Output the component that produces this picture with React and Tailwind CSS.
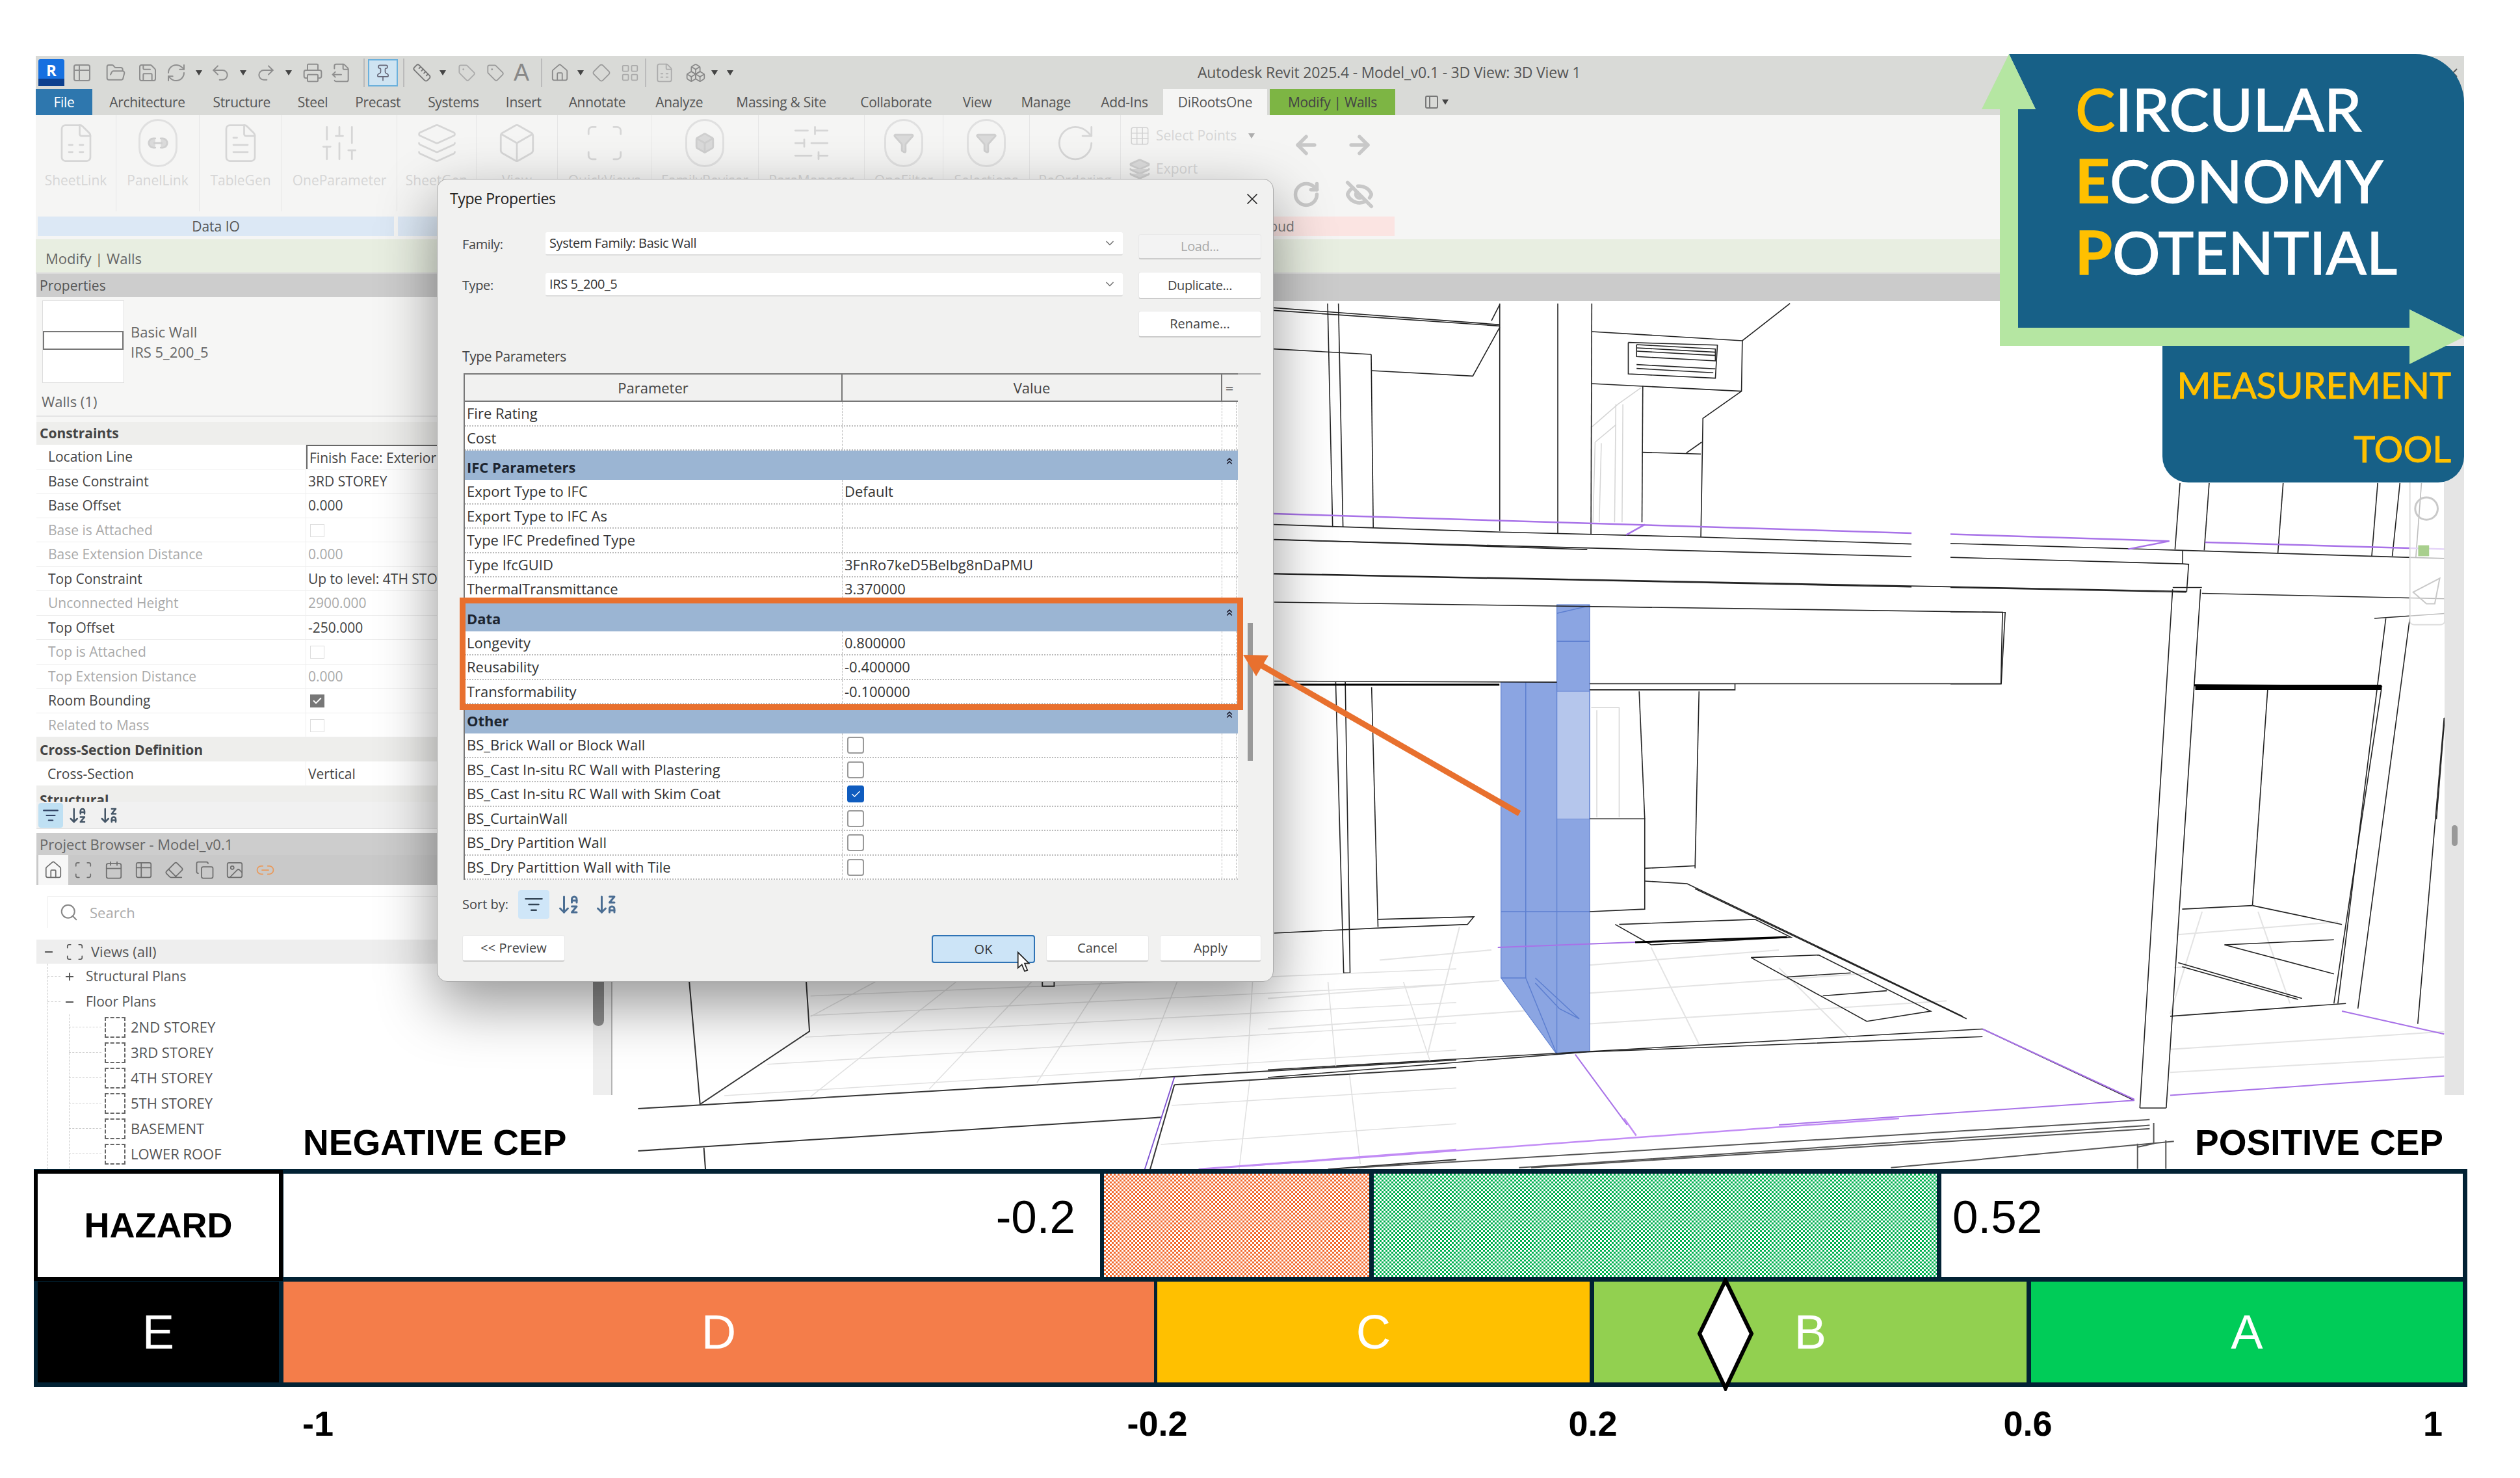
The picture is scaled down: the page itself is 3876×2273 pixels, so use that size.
import {
  ArrowDownAZ, ArrowDownZA, ArrowLeft, ArrowRight, Box, Check, ChevronDown, ChevronsUp, EyeOff,
  FileOutput, FileSpreadsheet, FileText, Filter, FolderOpen, Grid3x3, Home, Layers, Link2, ListFilter, Minus,
  Pin, Plus, Printer, Redo2, RefreshCw, RotateCw, Ruler, Save, Scan, Search, SlidersHorizontal, SlidersVertical,
  Table2, Tag, Undo2, X, Diamond, Calendar, Copy, Image, PanelLeft, Eraser, LayoutGrid, Boxes,
} from "lucide-react";

const Caret = ({ className = "" }) => (
  <svg viewBox="0 0 10 8" className={`w-[10px] h-[8px] ${className}`}>
    <path d="M0 0h10L5 8z" fill="#444" />
  </svg>
);

const quickAccess = [
  { icon: Table2, cell: "w-[54px]" },
  { icon: FolderOpen, cell: "w-[50px]" },
  { icon: Save, cell: "w-[47px]" },
  { icon: RefreshCw, cell: "w-[41px]" },
  { caret: true, cell: "w-[30px]" },
  { icon: Undo2, cell: "w-[36px]" },
  { caret: true, cell: "w-[34px]" },
  { icon: Redo2, cell: "w-[36px]" },
  { caret: true, cell: "w-[34px]" },
  { icon: Printer, cell: "w-[40px]" },
  { icon: FileOutput, cell: "w-[48px]" },
];

const tabs = [
  { label: "Architecture", cell: "w-[123px]" },
  { label: "Structure", cell: "w-[91px]" },
  { label: "Steel", cell: "w-[51px]" },
  { label: "Precast", cell: "w-[73px]" },
  { label: "Systems", cell: "w-[83px]" },
  { label: "Insert", cell: "w-[56px]" },
  { label: "Annotate", cell: "w-[94px]" },
  { label: "Analyze", cell: "w-[82px]" },
  { label: "Massing & Site", cell: "w-[155px]" },
  { label: "Collaborate", cell: "w-[122px]" },
  { label: "View", cell: "w-[51px]" },
  { label: "Manage", cell: "w-[84px]" },
  { label: "Add-Ins", cell: "w-[81px]" },
];

const ribbon = [
  { label: "SheetLink", icon: FileSpreadsheet, cell: "w-[124px]" },
  { label: "PanelLink", icon: Link2, cell: "w-[128px]", ring: true },
  { label: "TableGen", icon: FileText, cell: "w-[127px]" },
  { label: "OneParameter", icon: SlidersVertical, cell: "w-[177px]" },
  { label: "SheetGen", icon: Layers, cell: "w-[122px]" },
  { label: "View", icon: Box, cell: "w-[125px]" },
  { label: "QuickViews", icon: Scan, cell: "w-[144px]" },
  { label: "FamilyReviser", icon: Box, cell: "w-[165px]", ring: true },
  { label: "ParaManager", icon: SlidersHorizontal, cell: "w-[163px]" },
  { label: "OneFilter", icon: Filter, cell: "w-[121px]", ring: true },
  { label: "Selections", icon: Filter, cell: "w-[133px]", ring: true },
  { label: "ReOrdering", icon: RotateCw, cell: "w-[140px]" },
];

const properties = [
  { label: "Location Line", value: "Finish Face: Exterior", boxed: true },
  { label: "Base Constraint", value: "3RD STOREY" },
  { label: "Base Offset", value: "0.000" },
  { label: "Base is Attached", check: "off", off: true },
  { label: "Base Extension Distance", value: "0.000", off: true },
  { label: "Top Constraint", value: "Up to level: 4TH STOREY" },
  { label: "Unconnected Height", value: "2900.000", off: true },
  { label: "Top Offset", value: "-250.000" },
  { label: "Top is Attached", check: "off", off: true },
  { label: "Top Extension Distance", value: "0.000", off: true },
  { label: "Room Bounding", check: "on" },
  { label: "Related to Mass", check: "off", off: true },
];

const storeys = ["2ND STOREY", "3RD STOREY", "4TH STOREY", "5TH STOREY", "BASEMENT", "LOWER ROOF", ""];

const browserIcons = [
  { icon: Home, cell: "w-[46px] bg-[#f7f7f7]" },
  { icon: Scan, cell: "w-[46px]" },
  { icon: Calendar, cell: "w-[47px]" },
  { icon: Table2, cell: "w-[46px]" },
  { icon: Eraser, cell: "w-[48px]" },
  { icon: Copy, cell: "w-[46px]" },
  { icon: Image, cell: "w-[46px]" },
  { icon: Link2, cell: "w-[48px] text-[#e99a5c]" },
];

const paramRows = [
  { h: "", rows: [{ p: "Fire Rating" }, { p: "Cost" }] },
  {
    h: "IFC Parameters",
    rows: [
      { p: "Export Type to IFC", v: "Default" },
      { p: "Export Type to IFC As" },
      { p: "Type IFC Predefined Type" },
      { p: "Type IfcGUID", v: "3FnRo7keD5Belbg8nDaPMU" },
      { p: "ThermalTransmittance", v: "3.370000" },
    ],
  },
  {
    h: "Data",
    rows: [
      { p: "Longevity", v: "0.800000" },
      { p: "Reusability", v: "-0.400000" },
      { p: "Transformability", v: "-0.100000" },
    ],
  },
  {
    h: "Other",
    rows: [
      { p: "BS_Brick Wall or Block Wall", c: "off" },
      { p: "BS_Cast In-situ RC Wall with Plastering", c: "off" },
      { p: "BS_Cast In-situ RC Wall with Skim Coat", c: "on" },
      { p: "BS_CurtainWall", c: "off" },
      { p: "BS_Dry Partition Wall", c: "off" },
      { p: "BS_Dry Partittion Wall with Tile", c: "off" },
    ],
  },
];

// line work traced from the 3D view, one group per traced region
const sketchTop = [
  "30,100 575,178", "30,112 575,184", "160,80 172,1112", "186,80 197,1112", "30,290 265,315", "265,315 270,1115",
  "265,390 510,415 575,190", "555,160 575,85", "575,80 575,1130", "715,80 715,1140", "797,80 795,1145",
  "797,210 1160,252 1275,80", "1160,252 1158,485 1065,610 1060,1158", "797,450 1158,485", "920,460 918,1090",
  "918,767 1060,775", "1025,770 1062,720", "885,260 1100,272 1095,425 885,405 885,260", "905,270 1095,290 1095,345 905,325 905,270",
  "905,285 1095,305", "905,300 1095,320", "905,362 1095,382", "905,380 1090,400",
  "30,1100 575,1135 1060,1158 1568,1190", "30,1170 1568,1248", "30,1328 1568,1388",
];
const sketchTopGray = [
  "860,545 915,470", "855,545 852,1090", "872,545 870,1090", "805,720 855,640", "805,720 800,1090", "820,725 815,1090", "797,650 860,545",
];
const sketchRight = [
  "700,410 1490,445", "0,440 700,468 718,470 712,590", "0,570 710,590", "670,570 758,570", "758,595 1490,618",
  "1278,703 1490,682", "0,380 700,410", "0,675 165,677 153,985 0,985", "692,120 677,405", "780,120 765,410", "1003,120 987,422",
  "1288,120 1270,435", "1355,120 1332,435", "1420,120 1403,440", "700,410 700,468", "1490,1130 1465,1568",
];
const sketchMain = [
  "8,420 400,440", "8,487 1150,522", "8,543 920,563 918,703", "8,698 362,700", "403,703 918,703",
  "1133,518 1092,1535", "1168,518 1125,1535", "1092,1535 1125,1535",
  "1400,575 1340,1330", "1430,575 1365,1340", "1395,708 1335,1330", "1252,715 1233,1138", "1233,1138 1145,1145", "1233,1138 1345,1175",
  "1198,1215 1335,1205", "1198,1215 1335,1272", "1140,1250 1295,1320", "1145,1258 1290,1322", "1130,1355 1350,1330", "1440,1370 1473,770",
  "85,700 95,1270 103,1270 97,700", "130,710 138,1180", "138,1165 258,1160 250,1175 140,1182", "8,1192 140,1182",
  "403,715 585,715 585,703", "465,718 472,968", "540,718 535,1065", "403,968 472,968 472,1145 403,1150", "472,1065 535,1060",
  "472,1090 525,1095 870,1355", "535,1105 875,1360", "435,1175 480,1215 655,1200 610,1165 440,1175",
  "605,1240 690,1235 830,1345 750,1365 605,1240", "650,1278 730,1270", "695,1315 775,1305",
  "0,1460 895,1380", "0,1475 400,1425 895,1395", "895,1380 1085,1520",
];
const sketchHeavy = ["8,705 290,705", "1160,706 1395,708", "460,1210 650,1200"];
const sketchPurple = ["895,1380 1085,1518", "640,1568 1085,1520", "1130,1510 1473,1472", "385,1430 450,1568", "288,1220 460,1210", "1345,1345 1473,1390"];
const sketchFloor = [
  "140,1245 280,1225", "400,1255 640,1225", "0,1320 290,1285", "400,1310 760,1270", "0,1380 360,1340", "400,1370 850,1325",
  "1140,1195 1340,1170", "1135,1260 1150,1258", "1130,1420 1473,1385", "1130,1465 1473,1435", "240,1180 200,1430", "480,1220 540,1410",
  "640,1260 730,1400", "1170,1150 1130,1350", "1240,1150 1280,1330",
];
const sketchBelow = [
  "145,60 165,625 368,288 362,60", "50,645 1568,420", "50,840 1020,685", "172,825 175,925", "1045,535 1000,925", "1045,535 1568,455",
  "1330,925 1568,880", "800,60 800,80 822,80 822,60",
];
const sketchBelowGray = [
  "370,125 1568,0", "370,215 1568,70", "360,315 1568,155", "290,440 1568,250", "210,585 1568,375", "1040,630 1568,550", "1020,810 1568,715",
  "490,60 370,220", "640,60 370,590", "780,60 590,555", "910,60 790,525", "1050,60 980,500", "1190,60 1180,470", "1330,60 1345,460", "1470,60 1520,430",
  "1185,510 1165,925", "1370,490 1390,900",
];
const sketchLow = ["130,215 1110,5", "330,215 1110,30", "345,215 1110,45", "790,215 1140,100", "1095,110 1095,220", "1130,95 1130,220", "1115,20 1115,110 1095,125"];

const Lines = ({ items, stroke = "#222", width = 1.6 }) =>
  items.map((pts) => (
    <polyline key={pts} points={pts} fill="none" stroke={stroke} strokeWidth={width} vectorEffect="non-scaling-stroke" />
  ));

function ModelView() {
  return (
    <svg viewBox="942 463 2818 1335" className="w-full h-full block">
      <g transform="translate(1950 500) scale(1.2283 0.7844)">
        <Lines items={sketchFloor} stroke="#e3e3e3" width={2} />
        <polygon points="292,700 362,700 362,1430 292,1280" fill="#8ba5e2" stroke="#5d7fd0" />
        <polygon points="362,548 403,548 403,1425 362,1430" fill="#8ba5e2" stroke="#5d7fd0" />
        <polygon points="362,718 403,718 403,968 362,968" fill="#b5c6ec" stroke="#5d7fd0" />
        <Lines items={["323,700 323,1280", "292,1280 323,1280 362,1430", "362,620 403,620", "362,565 403,550", "292,1150 403,1150", "335,1280 390,1360 365,1340 335,1290"]} stroke="#5d7fd0" width={1.5} />
        <Lines items={["405,750 440,750 440,965", "412,755 412,965"]} stroke="#d5d5d5" width={1.5} />
        <Lines items={sketchMain} />
        <Lines items={sketchHeavy} stroke="#000" width={3} />
        <Lines items={sketchPurple} stroke="#a872e8" width={2} />
      </g>
      <g transform="translate(1940 440) scale(0.6378 0.3333)">
        <Lines items={sketchTopGray} stroke="#d5d5d5" width={1.5} />
        <Lines items={sketchTop} />
        <Lines items={["30,1050 1568,1140", "880,1148 925,1100"]} stroke="#a872e8" width={2.5} />
      </g>
      <g transform="translate(3000 700) scale(0.5102 0.3571)">
        <Lines items={sketchRight} />
        <Lines items={["738,1000 1298,1000"]} stroke="#000" width={8} />
        <Lines items={["0,340 660,370 535,405", "768,375 1490,405"]} stroke="#a872e8" width={2.5} />
        <rect x="1385" y="100" width="105" height="630" rx="14" fill="#fff" fillOpacity="0.7" stroke="#ddd" strokeWidth="2" vectorEffect="non-scaling-stroke" />
        <ellipse cx="1435" cy="230" rx="34" ry="48" fill="none" stroke="#c9c9c9" strokeWidth="3" vectorEffect="non-scaling-stroke" />
        <rect x="1410" y="388" width="33" height="47" fill="#a8cf8d" />
        <polygon points="1395,590 1475,530 1460,640 1435,640" fill="none" stroke="#c9c9c9" strokeWidth="2" vectorEffect="non-scaling-stroke" />
      </g>
      <g transform="translate(940 1490) scale(0.829 0.3333)">
        <Lines items={sketchBelowGray} stroke="#e0e0e0" width={1.5} />
        <Lines items={sketchBelow} stroke="#333" width={2} />
        <Lines items={["1045,500 990,925"]} stroke="#7c4fd0" width={1.8} />
        <Lines items={["1090,925 1568,835"]} stroke="#c28cf5" width={3} />
      </g>
      <g transform="translate(1926 1720) scale(1.2436 0.3527)">
        <Lines items={sketchLow} stroke="#555" width={2} />
        <Lines items={["0,205 800,0", "460,0 475,75"]} stroke="#c28cf5" width={2.5} />
      </g>
    </svg>
  );
}

function Ribbon() {
  return (
    <div className="h-[191px] bg-[#f5f5f4] flex flex-col">
      <div className="h-[156px] flex">
        {ribbon.map((item) => (
          <div key={item.label} className={`${item.cell} h-[148px] border-r border-[#e6e6e6] flex flex-col items-center`}>
            <div className="h-[86px] flex items-center justify-center">
              {item.ring ? (
                <div className="w-[60px] h-[74px] rounded-full border-[3px] border-[#e0e0e0] flex items-center justify-center">
                  <item.icon size={34} className="text-[#cfcfcf]" fill="#dadada" />
                </div>
              ) : (
                <item.icon size={66} strokeWidth={1} className="text-[#d6d6d6]" />
              )}
            </div>
            <div className="text-[21px] leading-[28px] text-[#d6d6d6] whitespace-nowrap">{item.label}</div>
          </div>
        ))}
        <div className="w-[241px] flex flex-col gap-[15px] pl-[12px] pt-[14px]">
          <div className="flex items-center gap-[8px] h-[36px]">
            <Grid3x3 size={34} strokeWidth={1} className="text-[#d2d2d2]" />
            <span className="text-[21px] text-[#d6d6d6]">Select Points</span>
            <Caret className="ml-[10px] opacity-40" />
          </div>
          <div className="flex items-center gap-[8px] h-[36px]">
            <Layers size={34} className="text-[#cfcfcf]" fill="#dcdcdc" />
            <span className="text-[21px] text-[#d6d6d6]">Export</span>
          </div>
        </div>
        <div className="grid grid-cols-2 w-[160px] pt-[24px] gap-y-[20px] text-[#c8c8c8]">
          <ArrowLeft size={44} strokeWidth={3} className="ml-[22px]" />
          <ArrowRight size={44} strokeWidth={3} className="ml-[24px]" />
          <RotateCw size={44} strokeWidth={3} className="ml-[22px]" />
          <EyeOff size={44} strokeWidth={3} className="ml-[24px]" />
        </div>
      </div>
      <div className="flex h-[30px] pl-[3px] text-[21px] leading-[30px]">
        <div className="w-[548px] bg-[#dce8f5] text-center text-[#555]">Data IO</div>
        <div className="w-[1200px] ml-[6px] bg-[#dce8f5]" />
        <div className="w-[333px] bg-[#fbe4e2] pl-[122px] text-[#777]">Cloud</div>
      </div>
    </div>
  );
}

function PropertiesPanel() {
  return (
    <>
      <div className="h-[36px] bg-[#cdcdcd] pl-[5px] text-[21px] leading-[36px] text-[#555]">Properties</div>
      <div className="h-[182px] bg-[#f6f6f5] relative pl-[9px] pt-[5px] flex gap-[10px]">
        <div className="w-[126px] h-[127px] bg-white border border-[#ddd] flex items-center">
          <div className="w-full h-[29px] bg-white border-2 border-[#777] -mt-[4px]" />
        </div>
        <div className="pt-[33px] text-[22px] leading-[31px] text-[#666]">
          <div>Basic Wall</div>
          <div>IRS 5_200_5</div>
        </div>
        <div className="absolute left-[8px] top-[146px] text-[22px] leading-[28px] text-[#666]">Walls (1)</div>
      </div>
      <div className="h-[10px] bg-[#f6f6f5] border-t-2 border-[#e4e4e4]" />
      <div className="h-[35px] bg-[#eeeeec] pl-[5px] text-[21px] font-bold leading-[35px] text-[#444]">Constraints</div>
      {properties.map((row) => (
        <div key={row.label} className={`h-[37.5px] flex border-b border-[#eee] bg-white text-[21px] leading-[36px] ${row.off ? "text-[#aaa]" : "text-[#444]"}`}>
          <div className="w-[415px] pl-[18px] border-r border-[#eee] whitespace-nowrap">{row.label}</div>
          <div className={`flex-1 pl-[3px] whitespace-nowrap ${row.boxed ? "border-t-2 border-l-2 border-[#666]" : ""}`}>
            {row.check === "off" && <div className="w-[22px] h-[20px] mt-[9px] ml-[3px] border border-[#ddd] bg-white" />}
            {row.check === "on" && (
              <div className="w-[22px] h-[20px] mt-[9px] ml-[3px] bg-[#777] flex items-center justify-center">
                <Check size={16} strokeWidth={3} className="text-white" />
              </div>
            )}
            {row.value}
          </div>
        </div>
      ))}
      <div className="h-[37px] bg-[#eeeeec] pl-[5px] text-[21px] font-bold leading-[39px] text-[#444]">Cross-Section Definition</div>
      <div className="h-[37px] flex bg-white text-[21px] leading-[38px] text-[#444]">
        <div className="w-[415px] pl-[17px] border-r border-[#eee]">Cross-Section</div>
        <div className="pl-[3px]">Vertical</div>
      </div>
      <div className="h-[25px] overflow-hidden bg-[#eeeeec] pl-[5px] text-[21px] font-bold leading-[44px] text-[#444]">Structural</div>
      <div className="h-[42px] bg-[#f1f1f1] flex items-center pl-[3px] gap-[8px] border-b border-[#ddd]">
        <div className="w-[38px] h-[38px] rounded-[4px] bg-[#bfe0f3] flex items-center justify-center">
          <ListFilter size={26} className="text-[#346]" />
        </div>
        <ArrowDownAZ size={30} className="text-[#456]" />
        <ArrowDownZA size={30} className="ml-[10px] text-[#456]" />
      </div>
    </>
  );
}

function ProjectBrowser() {
  return (
    <>
      <div className="mt-[6px] h-[34px] bg-[#cdcdcd] pl-[5px] text-[22px] leading-[34px] text-[#666]">Project Browser - Model_v0.1</div>
      <div className="h-[46px] bg-[#c9c9c9] flex pl-[3px]">
        {browserIcons.map((item, i) => (
          <div key={i} className={`${item.cell} h-full flex items-center justify-center text-[#6e6e6e]`}>
            <item.icon size={30} strokeWidth={1.4} />
          </div>
        ))}
      </div>
      <div className="h-[84px] bg-white pl-[17px] pt-[17px]">
        <div className="h-[49px] border-l border-t border-[#eee] flex items-center pl-[17px] gap-[17px] text-[22px] text-[#aaa]">
          <Search size={30} strokeWidth={1.6} className="text-[#888]" />
          Search
        </div>
      </div>
      <div className="h-[37px] bg-[#eee] flex items-center text-[22px] text-[#555]">
        <Minus size={18} strokeWidth={2.5} className="ml-[10px]" />
        <Scan size={30} strokeWidth={1.3} className="ml-[16px]" />
        <span className="ml-[10px]">Views (all)</span>
      </div>
      <div className="relative bg-white text-[#555] text-[21px]">
        <div className="absolute left-[17px] top-0 h-full border-l border-dashed border-[#ccc]" />
        <div className="absolute left-[50px] top-[78px] h-full border-l border-dashed border-[#ccc]" />
        <div className="absolute left-[856px] top-0 w-[30px] h-[202px] bg-[#eeeeee] border-r-2 border-[#b5b5b5]">
          <div className="w-[17px] h-[96px] bg-[#8c8c8c] rounded-b-full" />
        </div>
        <div className="h-[39px] flex items-center pl-[17px]">
          <span className="w-[20px] border-t border-dashed border-[#ccc]" />
          <Plus size={18} strokeWidth={2.5} className="ml-[5px]" />
          <span className="ml-[16px]">Structural Plans</span>
        </div>
        <div className="h-[39px] flex items-center pl-[17px]">
          <span className="w-[20px] border-t border-dashed border-[#ccc]" />
          <Minus size={18} strokeWidth={2.5} className="ml-[5px]" />
          <span className="ml-[16px]">Floor Plans</span>
        </div>
        {storeys.map((name, i) => (
          <div key={i} className="h-[39px] flex items-center pl-[50px] overflow-hidden text-[22px]">
            <span className="w-[50px] border-t border-dashed border-[#ccc]" />
            <span className="ml-[5px] w-[32px] h-[32px] border-2 border-dashed border-[#666] shrink-0" />
            <span className="ml-[8px]">{name}</span>
          </div>
        ))}
      </div>
    </>
  );
}

const CheckCell = ({ kind }) =>
  kind === "on" ? (
    <span className="mt-[5px] ml-[4px] w-[26px] h-[26px] rounded-[4px] bg-[#0f5cbf] flex items-center justify-center">
      <Check size={17} strokeWidth={2} className="text-white" />
    </span>
  ) : (
    <span className="block mt-[5px] ml-[4px] w-[26px] h-[26px] rounded-[4px] border-2 border-[#999] bg-white" />
  );

function ParamTable() {
  return (
    <div className="relative ml-[2px] w-[1226px] text-[22px] text-[#333]">
      <div className="h-[44px] flex border-t-2 border-b-2 border-[#777] w-[1191px] border-l-2 text-[#444] text-center leading-[40px]">
        <div className="w-[581px] border-r-2 border-[#777]">Parameter</div>
        <div className="w-[584px] border-r-2 border-[#777]">Value</div>
        <div className="w-[22px]">=</div>
      </div>
      <div className="absolute left-[1191px] top-0 w-[35px] border-t-2 border-[#aaa]" />
      <div className="w-[1191px] border-l-2 border-[#777] h-[735px] overflow-hidden">
        {paramRows.map((group) => (
          <div key={group.rows[0].p}>
            {group.h && (
              <div className="h-[45px] bg-[#9bb5d3] flex justify-between pl-[3px] pr-[5px] font-bold leading-[50px] text-[#1d2530]">
                {group.h}
                <ChevronsUp size={16} strokeWidth={2.5} className="mt-[8px] text-[#223]" />
              </div>
            )}
            {group.rows.map((row) => (
              <div key={row.p} className="h-[37.5px] flex bg-white border-b-2 border-dotted border-[#bbb] leading-[35px]">
                <div className="w-[581px] pl-[3px] border-r border-dashed border-[#bbb] whitespace-nowrap">{row.p}</div>
                <div className="w-[584px] pl-[3px] border-r border-dashed border-[#bbb]">{row.c ? <CheckCell kind={row.c} /> : row.v}</div>
                <div className="w-[22px] border-r border-dashed border-[#bbb]" />
              </div>
            ))}
          </div>
        ))}
      </div>
      <div className="absolute left-[1206px] top-[384px] w-[8px] h-[212px] bg-[#999]" />
      <div className="absolute -left-[6px] top-[345px] w-[1205px] h-[173px] border-[9px] border-[#e8702e]" />
    </div>
  );
}

const DialogButton = ({ label, cell, dim }) => (
  <div className={`${cell} rounded-[4px] border border-[#e8e8e8] border-b-2 border-b-[#ccc] flex items-center justify-center text-[20px] ${dim ? "bg-[#f3f3f3] text-[#aaa]" : "bg-white text-[#444]"}`}>
    {label}
  </div>
);

function TypePropertiesDialog() {
  return (
    <div className="absolute left-[672px] top-[275px] w-[1287px] h-[1235px] rounded-[16px] bg-[#f1f1f0] border border-[#aaa] shadow-[0_34px_90px_rgba(0,0,0,0.42)]">
      <div className="h-[81px] flex justify-between pl-[19px] pr-[18px] pt-[12px] text-[23px] tracking-[-0.4px] text-[#222]">
        Type Properties
        <X size={28} strokeWidth={1.5} className="mt-[4px]" />
      </div>
      <div className="pl-[38px] text-[20px] text-[#444]">
        <div className="h-[61px] flex tracking-[-0.4px]">
          <div className="w-[128px] leading-[38px]">Family:</div>
          <div className="w-[888px] h-[36px] bg-white border-b-2 border-[#ddd] rounded-[3px] flex justify-between items-center pl-[6px] pr-[10px] text-[#333]">
            System Family: Basic Wall
            <ChevronDown size={20} className="text-[#777]" />
          </div>
          <DialogButton label="Load..." cell="ml-[24px] mt-[3px] w-[189px] h-[39px]" dim />
        </div>
        <div className="h-[60px] flex tracking-[-0.4px]">
          <div className="w-[128px] leading-[42px]">Type:</div>
          <div className="w-[888px] h-[36px] mt-[2px] bg-white border-b-2 border-[#ddd] rounded-[3px] flex justify-between items-center pl-[6px] pr-[10px] text-[#333]">
            IRS 5_200_5
            <ChevronDown size={20} className="text-[#777]" />
          </div>
          <DialogButton label="Duplicate..." cell="ml-[24px] w-[189px] h-[42px]" />
        </div>
        <div className="h-[41px] flex pl-[1040px]">
          <DialogButton label="Rename..." cell="w-[189px] h-[41px]" />
        </div>
        <div className="h-[24px] mt-[17px] mb-[14px] leading-[24px] text-[21px] tracking-[-0.4px]">Type Parameters</div>
        <ParamTable />
        <div className="h-[44px] mt-[16px] flex items-center gap-[12px] text-[20px]">
          <span className="w-[74px] whitespace-nowrap">Sort by:</span>
          <div className="w-[48px] h-[44px] rounded-[4px] bg-[#cfe6f8] flex items-center justify-center">
            <ListFilter size={30} className="text-[#345]" />
          </div>
          <ArrowDownAZ size={36} className="text-[#4a6d92]" />
          <ArrowDownZA size={36} className="ml-[10px] text-[#4a6d92]" />
        </div>
        <div className="relative h-[43px] mt-[25px] flex items-start">
          <DialogButton label="<< Preview" cell="w-[158px] h-[41px]" />
          <div className="ml-[564px] w-[159px] h-[43px] bg-[#cce4f7] border-2 border-[#2f73b5] rounded-[4px] flex items-center justify-center text-[20px] text-[#333]">OK</div>
          <DialogButton label="Cancel" cell="ml-[17px] w-[158px] h-[41px]" />
          <DialogButton label="Apply" cell="ml-[17px] w-[156px] h-[41px]" />
          <svg viewBox="0 0 14 20" className="absolute left-[853px] top-[24px] w-[24px] h-[36px]">
            <path d="M1 1v14l3.5-3 2.5 6 2.500-1-2.500-6H11z" fill="#fff" stroke="#222" strokeWidth="1" />
          </svg>
        </div>
      </div>
    </div>
  );
}

function Logo() {
  return (
    <div className="absolute left-[3048px] top-[83px] w-[742px] h-[659px] font-['Lato',sans-serif]">
      <svg viewBox="0 0 742 659" className="absolute inset-0 w-full h-full">
        <path d="M42 0H667A75 75 0 0 1 742 75V435L658 393V421H56V85H83Z" fill="#176087" />
        <path d="M278 449H742V619A40 40 0 0 1 702 659H318A40 40 0 0 1 278 619Z" fill="#176087" />
        <path d="M42 0L83 85H56V421H658V393L742 435L658 477V449H28V85H0Z" fill="#b5e6a2" />
      </svg>
      <div className="relative pl-[144px] pt-[29px] text-[92px] leading-[110px] text-white whitespace-nowrap [-webkit-text-stroke:1.5px_currentColor]">
        <div><span className="text-[#ffc000]">C</span>IRCULAR</div>
        <div><span className="text-[#ffc000] font-bold">E</span>CONOMY</div>
        <div><span className="text-[#ffc000] font-bold">P</span>OTENTIAL</div>
      </div>
      <div className="relative mt-[101px] pr-[20px] text-right text-[56px] leading-[98px] text-[#ffc000] [-webkit-text-stroke:1px_currentColor]">
        <div>MEASUREMENT</div>
        <div>TOOL</div>
      </div>
    </div>
  );
}

function OrangeArrow() {
  return (
    <svg viewBox="1900 995 450 270" className="absolute left-[1900px] top-[995px] w-[450px] h-[270px]">
      <line x1="2337" y1="1251" x2="1938" y2="1022" stroke="#e8702e" strokeWidth="9" />
      <polygon points="1912,1007 1932,1040 1951,1008" fill="#e8702e" />
    </svg>
  );
}

function CepScale() {
  return (
    <div className="font-['Liberation_Sans',Arial,sans-serif]">
      <div className="relative ml-[52px] w-[3743px] bg-[#022234] pl-[6px] pr-[7px] py-[7px] flex flex-col gap-[7px]">
        <div className="h-[159px] flex">
          <div className="relative z-10 w-[371px] bg-white flex items-center justify-center text-[54px] font-bold text-black shadow-[0_0_0_6px_#000]">HAZARD</div>
          <div className="ml-[7px] w-[1256px] bg-white flex items-start justify-end pr-[38px] pt-[22px] text-[71px] leading-[90px] text-black">-0.2</div>
          <div className="ml-[6px] w-[408px] bg-[conic-gradient(#f26a2e_25%,#fff_0_50%,#f26a2e_0_75%,#fff_0)] bg-[length:6px_6px]" />
          <div className="ml-[7px] w-[866px] bg-[conic-gradient(#00b050_25%,#fff_0_50%,#00b050_0_75%,#fff_0)] bg-[length:6px_6px]" />
          <div className="ml-[7px] flex-1 bg-white pl-[17px] pt-[22px] text-[71px] leading-[90px] text-black">0.52</div>
        </div>
        <div className="h-[155px] flex text-[74px] text-white">
          <div className="w-[371px] bg-black flex items-center justify-center">E</div>
          <div className="ml-[7px] w-[1339px] bg-[#f47d4a] flex items-center justify-center">D</div>
          <div className="ml-[5px] w-[665px] bg-[#ffc000] flex items-center justify-center">C</div>
          <div className="ml-[7px] w-[665px] bg-[#92d050] flex items-center justify-center">B</div>
          <div className="ml-[7px] flex-1 bg-[#00cc58] flex items-center justify-center">A</div>
        </div>
        <svg viewBox="0 0 90 174" className="absolute left-[2557px] top-[167px] w-[90px] h-[174px]">
          <polygon points="45,4 85,86 45,170 5,86" fill="#fff" stroke="#000" strokeWidth="6" strokeLinejoin="miter" />
        </svg>
      </div>
      <div className="h-[140px] pl-[465px] pt-[21px] flex text-[54px] leading-[70px] font-bold text-black">
        <span className="w-[60px]">-1</span>
        <span className="ml-[1190px] w-[130px] text-center">-0.2</span>
        <span className="ml-[540px] w-[130px] text-center">0.2</span>
        <span className="ml-[539px] w-[130px] text-center">0.6</span>
        <span className="ml-[523px] w-[50px] text-right">1</span>
      </div>
    </div>
  );
}

export default function App() {
  return (
    <div className="relative w-[3876px] h-[2273px] overflow-hidden bg-white pt-[86px] font-['Open_Sans',sans-serif]">
      <div className="ml-[55px] w-[3735px] h-[1712px] flex flex-col">
        <div className="h-[51px] bg-[#d9dad7] flex items-center">
          <div className="ml-[4px] w-[40px] h-[41px] rounded-t-[3px] bg-[linear-gradient(#1670e0_72%,#0b3f8f_72%)] text-white font-bold text-[24px] text-center leading-[34px]">R</div>
          {quickAccess.map((item, i) => (
            <div key={i} className={`${item.cell} flex justify-center text-[#8e8e8e]`}>
              {item.caret ? <Caret /> : <item.icon size={32} strokeWidth={1.5} />}
            </div>
          ))}
          <div className="h-[44px] border-l-2 border-[#bbb] ml-[10px]" />
          <div className="w-[46px] h-[42px] ml-[5px] bg-[#cfe4f2] border-2 border-[#6bb0dc] flex items-center justify-center">
            <Pin size={28} strokeWidth={1.4} className="text-[#667]" />
          </div>
          <div className="h-[44px] border-l-2 border-[#bbb] ml-[8px]" />
          <Ruler size={30} strokeWidth={1.5} className="ml-[12px] text-[#777]" />
          <Caret className="ml-[12px]" />
          <Tag size={28} strokeWidth={1.5} className="ml-[18px] text-[#aaa]" />
          <Tag size={28} strokeWidth={1.5} className="ml-[16px] text-[#999]" />
          <span className="ml-[14px] text-[#888] text-[36px] font-['Liberation_Sans',sans-serif] leading-none">A</span>
          <div className="h-[44px] border-l-2 border-[#bbb] ml-[18px]" />
          <Home size={30} strokeWidth={1.4} className="ml-[12px] text-[#888]" />
          <Caret className="ml-[12px]" />
          <Diamond size={30} strokeWidth={1.4} className="ml-[12px] text-[#999]" />
          <LayoutGrid size={30} strokeWidth={1.4} className="ml-[14px] text-[#aaa]" />
          <div className="h-[44px] border-l-2 border-[#bbb] ml-[8px]" />
          <FileSpreadsheet size={32} strokeWidth={1.3} className="ml-[12px] text-[#aaa]" />
          <Boxes size={32} strokeWidth={1.3} className="ml-[16px] text-[#888]" />
          <Caret className="ml-[8px]" />
          <Caret className="ml-[14px]" />
          <span className="ml-[714px] text-[23px] tracking-[-0.2px] text-[#555] whitespace-nowrap">Autodesk Revit 2025.4 - Model_v0.1 - 3D View: 3D View 1</span>
          <X size={22} className="ml-auto mr-[6px] text-[#555]" />
        </div>
        <div className="h-[40px] bg-[#d9dad7] flex items-stretch text-[21px] tracking-[-0.3px] text-[#555] whitespace-nowrap">
          <div className="w-[87px] bg-[#2e77ae] text-white text-center leading-[40px]">File</div>
          <div className="ml-[23px] flex gap-[38.25px] leading-[40px]">
            {tabs.map((tab) => (
              <div key={tab.label} className={`${tab.cell} text-center`}>{tab.label}</div>
            ))}
          </div>
          <div className="ml-[19px] w-[160px] bg-[#f5f5f4] text-center leading-[40px]">DiRootsOne</div>
          <div className="ml-[4px] w-[193px] bg-[#7db544] text-center leading-[40px] text-[#444]">Modify | Walls</div>
          <PanelLeft size={24} className="ml-[44px] mt-[8px] text-[#777]" />
          <Caret className="ml-[4px] mt-[16px]" />
        </div>
        <Ribbon />
        <div className="h-[53px] bg-[#e8eee1] border-b-2 border-[#ddd] pl-[15px] text-[22px] leading-[58px] text-[#666]">Modify | Walls</div>
        <div className="flex-1 flex min-h-0">
          <div className="w-[887px] shrink-0 h-[1377px] bg-white overflow-hidden pl-[1px]">
            <PropertiesPanel />
            <ProjectBrowser />
          </div>
          <div className="flex-1 flex flex-col">
            <div className="h-[42px] bg-[#cbcbcb] shrink-0" />
            <div className="flex flex-1 min-h-0">
              <div className="w-[2818px] h-[1335px] shrink-0">
                <ModelView />
              </div>
              <div className="w-[30px] h-[1221px] bg-[#e5e5e5] flex justify-center pt-[806px]">
                <div className="w-[9px] h-[32px] rounded-full bg-[#999]" />
              </div>
            </div>
          </div>
        </div>
      </div>
      <CepScale />
      <div className="absolute left-[466px] top-[1730px] text-[55px] leading-[54px] font-bold text-black font-['Liberation_Sans',sans-serif]">NEGATIVE CEP</div>
      <div className="absolute left-[3376px] top-[1730px] text-[55px] leading-[54px] font-bold text-black font-['Liberation_Sans',sans-serif]">POSITIVE CEP</div>
      <TypePropertiesDialog />
      <OrangeArrow />
      <Logo />
    </div>
  );
}
